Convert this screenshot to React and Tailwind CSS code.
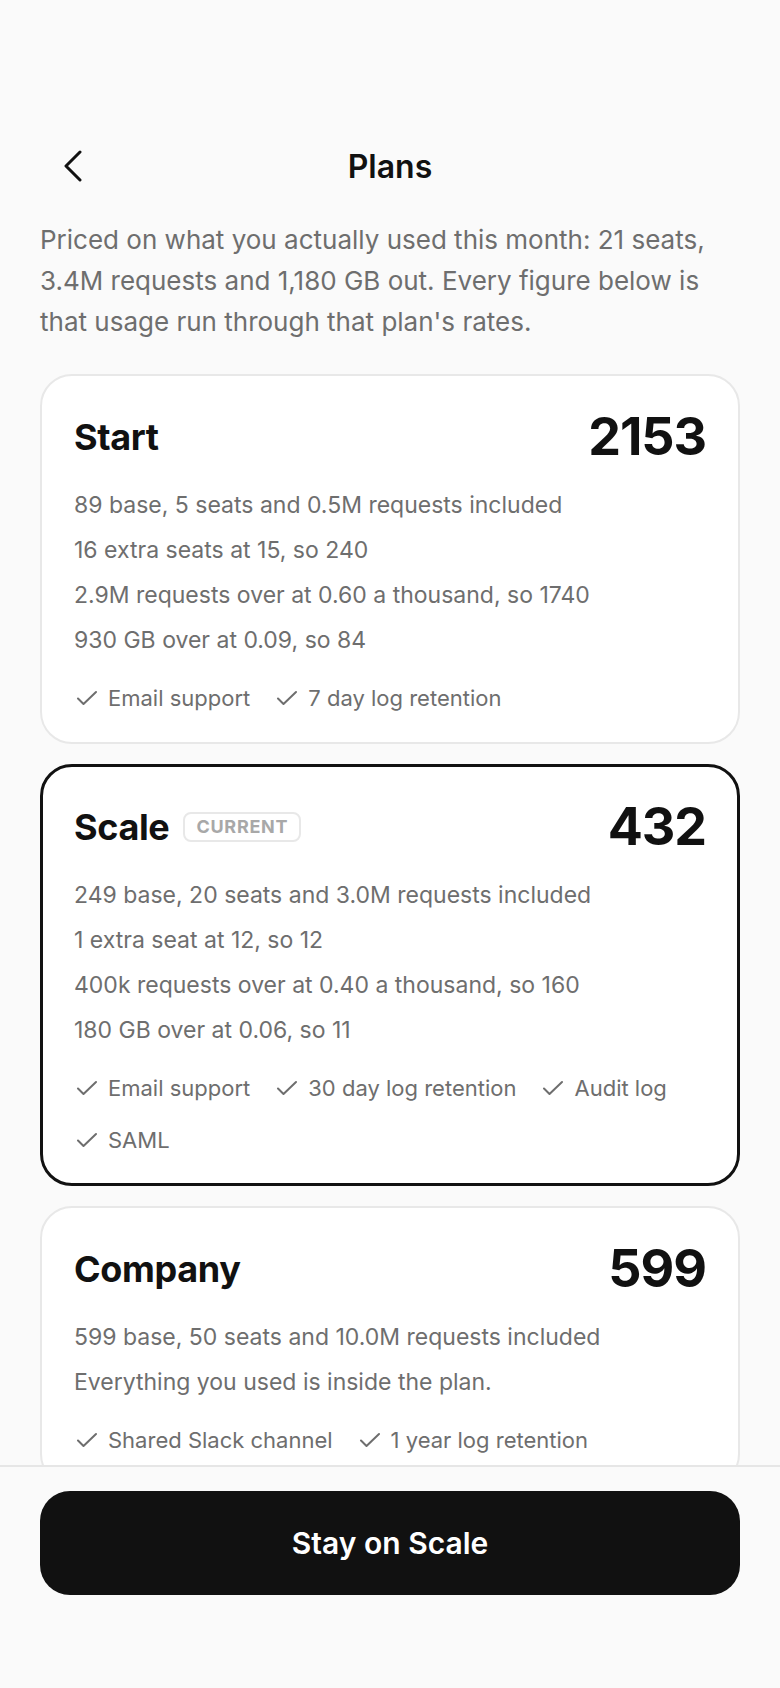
import React from "react";

const plans = [
  {
    name: "Start",
    price: "2153",
    lines: [
      "89 base, 5 seats and 0.5M requests included",
      "16 extra seats at 15, so 240",
      "2.9M requests over at 0.60 a thousand, so 1740",
      "930 GB over at 0.09, so 84",
    ],
    features: ["Email support", "7 day log retention"],
  },
  {
    name: "Scale",
    price: "432",
    current: true,
    lines: [
      "249 base, 20 seats and 3.0M requests included",
      "1 extra seat at 12, so 12",
      "400k requests over at 0.40 a thousand, so 160",
      "180 GB over at 0.06, so 11",
    ],
    features: ["Email support", "30 day log retention", "Audit log", "SAML"],
  },
  {
    name: "Company",
    price: "599",
    lines: [
      "599 base, 50 seats and 10.0M requests included",
      "Everything you used is inside the plan.",
    ],
    features: ["Shared Slack channel", "1 year log retention"],
  },
];

function CheckMark() {
  return (
    <svg width="23" height="16" viewBox="0 0 23 16" fill="none" className="shrink-0">
      <path
        d="M4 8.5 9.5 14 22 2"
        stroke="currentColor"
        strokeWidth="2"
        strokeLinecap="round"
        strokeLinejoin="round"
      />
    </svg>
  );
}

function PlanCard({ plan }) {
  // the selected plan gets a heavier dark outline; padding shrinks by the extra pixel
  const frame = plan.current
    ? "border-[3px] border-[#111111] px-[31px] pt-[31px] pb-[25px]"
    : "border-2 border-[#e8e8e8] px-[32px] pt-[32px] pb-[26px]";
  return (
    <section className={`rounded-[32px] bg-white ${frame}`}>
      <div className="flex h-[57px] items-center justify-between">
        <div className="flex items-center gap-[14px]">
          <h2 className="text-[36px] font-bold leading-none tracking-[-0.01em] text-[#111111]">
            {plan.name}
          </h2>
          {plan.current && (
            <span className="flex h-[30px] items-center rounded-[8px] border-2 border-[#e8e8e8] px-[11px] text-[18px] font-bold leading-none tracking-[0.04em] text-[#a8a8a8]">
              CURRENT
            </span>
          )}
        </div>
        <div className="text-[52px] font-bold leading-none tracking-[-0.02em] text-[#111111]">
          {plan.price}
        </div>
      </div>
      <div className="mt-[18px] text-[23px] leading-[45px] text-[#6e6e6e]">
        {plan.lines.map((line) => (
          <p key={line}>{line}</p>
        ))}
      </div>
      <ul className="mt-[17px] flex flex-wrap gap-x-[24px] gap-y-[16px]">
        {plan.features.map((f) => (
          <li key={f} className="flex h-[36px] items-center gap-[11px] text-[22px] text-[#6e6e6e]">
            <CheckMark />
            <span>{f}</span>
          </li>
        ))}
      </ul>
    </section>
  );
}

export default function App() {
  return (
    <div className="flex h-[1688px] flex-col overflow-hidden bg-[#fafafa] font-[Inter,sans-serif] text-[#111111]">
      <div className="min-h-0 flex-1 overflow-hidden px-[40px] pt-[122px]">
        <header className="grid h-[88px] grid-cols-[1fr_auto_1fr] items-center">
          <button className="justify-self-start pl-[23px] text-[#111111]" aria-label="Back">
            <svg width="20" height="32" viewBox="0 0 20 32" fill="none">
              <path
                d="M17 2 3 16l14 14"
                stroke="currentColor"
                strokeWidth="3"
                strokeLinecap="round"
                strokeLinejoin="round"
              />
            </svg>
          </button>
          <h1 className="translate-y-[1px] text-[32px] font-semibold leading-none">Plans</h1>
          <div />
        </header>
        <p className="mt-[9px] text-[26px] leading-[41px] text-[#6e6e6e]">
          Priced on what you actually used this month: 21 seats, 3.4M requests and 1,180 GB out.
          Every figure below is that usage run through that plan's rates.
        </p>
        <div className="mt-[32px] flex flex-col gap-[20px]">
          {plans.map((p) => (
            <PlanCard key={p.name} plan={p} />
          ))}
        </div>
      </div>
      <div className="border-t-2 border-[#e6e6e6] bg-[#fafafa] px-[40px] pt-[24px] pb-[93px]">
        <button className="flex h-[104px] w-full items-center justify-center rounded-[30px] bg-[#111111] text-[30px] font-semibold text-white">
          Stay on Scale
        </button>
      </div>
    </div>
  );
}
